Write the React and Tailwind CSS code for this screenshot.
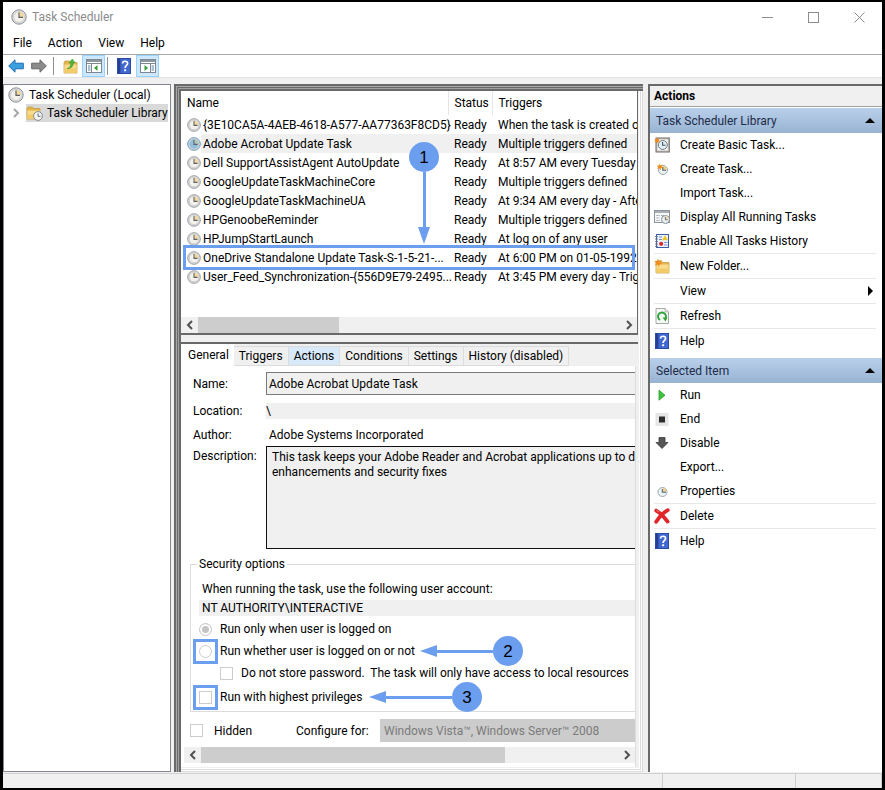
import React from "react";

const ClockIcon = ({ className, face = "#f4f1ea", wedge = "#f3d9a0", rim = "#8b8f94" }) => (
  <svg viewBox="0 0 16 16" className={className} aria-hidden="true">
    <circle cx="8" cy="8" r="7.2" fill="#dfe1e3" stroke={rim} strokeWidth="1" />
    <circle cx="8" cy="8" r="5.4" fill={face} stroke="#b5b8bb" strokeWidth="0.6" />
    <path d="M8 8V2.8A5.2 5.2 0 0 1 13.2 8Z" fill={wedge} />
    <path d="M8 3.4V8.4H12" fill="none" stroke="#5a5f66" strokeWidth="1.2" />
  </svg>
);

const HelpIcon = ({ className }) => (
  <svg viewBox="0 0 16 16" className={className} aria-hidden="true">
    <rect x="1.5" y="0.5" width="13" height="15" fill="#4168cf" stroke="#2b4aa6" />
    <path d="M2 1h2.4v14H2Z" fill="#263f94" />
    <path d="M6.6 5.4C6.6 2.6 11.6 2.5 11.6 5.4C11.6 7.4 9.1 7.4 9.1 10" fill="none" stroke="#fff" strokeWidth="1.7" />
    <rect x="8.2" y="11.3" width="1.9" height="1.9" fill="#fff" />
  </svg>
);

const Folder = ({ x = 0, y = 0 }) => (
  <g transform={`translate(${x} ${y})`}>
    <path d="M1 3.5L2 2h4.5l1 1.5H14V14H1Z" fill="#e3b54d" stroke="#c39a3f" strokeWidth="0.7" />
    <path d="M1.4 5.5H13.6V13.6H1.4Z" fill="#f9dc8b" />
    <path d="M1.4 9.5H13.6V13.6H1.4Z" fill="#f3cb68" />
  </g>
);

const LibraryIcon = ({ className }) => (
  <svg viewBox="0 0 17 16" className={className} aria-hidden="true">
    <Folder />
    <circle cx="12" cy="11" r="4.4" fill="#f5f4ee" stroke="#72818f" strokeWidth="0.9" />
    <path d="M12 8.3v3h2.6" fill="none" stroke="#4f6478" strokeWidth="0.9" />
  </svg>
);

const Spark = () => (
  <path d="M4 0.5L5 3L7.8 1.8L6.4 4.4L8.4 6L5.6 6.3L5 9L3.5 6.6L0.8 7.6L2 5L0.3 3.2L3 3Z" fill="#f08c1c" />
);

const NewFolderIcon = ({ className }) => (
  <svg viewBox="0 0 16 16" className={className} aria-hidden="true">
    <Folder x={1} y={1} />
    <Spark />
  </svg>
);

const BasicTaskIcon = ({ className }) => (
  <svg viewBox="0 0 16 16" className={className} aria-hidden="true">
    <rect x="2" y="1" width="13.3" height="14" fill="#c9c4c0" stroke="#746b68" />
    <rect x="3.5" y="2.5" width="10.3" height="11" fill="#f5f5f3" />
    <circle cx="8.8" cy="8" r="4.5" fill="#e5edf2" stroke="#69808f" />
    <path d="M8.6 5v3.3H11.5" fill="none" stroke="#3f5768" strokeWidth="1.1" />
    <g transform="scale(0.75)"><Spark /></g>
  </svg>
);

const CreateTaskIcon = ({ className }) => (
  <svg viewBox="0 0 16 16" className={className} aria-hidden="true">
    <circle cx="9" cy="9" r="4.5" fill="#eef1f2" stroke="#98a6ae" />
    <path d="M9 9V5A4 4 0 0 1 13 9Z" fill="#f3d08a" />
    <path d="M8.8 6v3.3H12" fill="none" stroke="#4a6374" strokeWidth="1.1" />
    <g transform="translate(2.5 2) scale(0.8)"><Spark /></g>
  </svg>
);

const RunningTasksIcon = ({ className }) => (
  <svg viewBox="0 0 16 16" className={className} aria-hidden="true">
    <rect x="0.5" y="1.5" width="15" height="12" fill="#f8f8f8" stroke="#8c9299" />
    <path d="M1 2h14v2H1Z" fill="#a9afb5" />
    <path d="M2.5 6.5h3M2.5 9h3M2.5 11.5h3M7 6.5h3" stroke="#8e99a3" strokeDasharray="1.4 0.6" />
    <circle cx="11.5" cy="10.5" r="4" fill="#edf1f2" stroke="#77868f" strokeWidth="0.9" />
    <path d="M11.5 10.5V7A3.5 3.5 0 0 1 15 10.5Z" fill="#f0dcae" />
    <path d="M11.4 8v2.8h2.2" fill="none" stroke="#4d6373" strokeWidth="0.9" />
  </svg>
);

const HistoryIcon = ({ className }) => (
  <svg viewBox="0 0 16 16" className={className} aria-hidden="true">
    <rect x="2.5" y="1.5" width="12" height="13" fill="#eef3fb" stroke="#3c5da8" />
    <path d="M1 3.5h3M1 6h3M1 8.5h3M1 11h3M1 13.3h3" stroke="#6b7686" strokeWidth="0.9" />
    <path d="M5 4h3M5 6.5h3M10 9.5h3.5M10 12h3.5" stroke="#6686c8" strokeWidth="0.9" />
    <path d="M11 2.3L13.9 7.3H8.1Z" fill="#f2c31d" />
    <circle cx="7.2" cy="10.8" r="2.1" fill="#d92a2a" />
  </svg>
);

const RefreshIcon = ({ className }) => (
  <svg viewBox="0 0 16 16" className={className} aria-hidden="true">
    <path d="M2 0.5h9l3.5 3.3V15.5H2Z" fill="#f8f8f8" stroke="#a4aaa4" />
    <path d="M11 0.5v3.3h3.5" fill="#e2e2e2" stroke="#a4aaa4" strokeWidth="0.7" />
    <path d="M6 12A4 4 0 1 1 11.4 10.6" fill="none" stroke="#2fa63c" strokeWidth="1.9" />
    <path d="M8.6 9.6H13.6L11.4 13.6Z" fill="#2fa63c" />
  </svg>
);

const RunIcon = ({ className }) => (
  <svg viewBox="0 0 16 16" className={className} aria-hidden="true">
    <path d="M5 3.2L11 8.2L5 13.2Z" fill="#3cc53a" stroke="#2a9a2c" strokeWidth="0.8" />
  </svg>
);

const EndIcon = ({ className }) => (
  <svg viewBox="0 0 16 16" className={className} aria-hidden="true">
    <rect x="1.5" y="2" width="13" height="13" fill="#e6e6e6" />
    <rect x="5" y="5.5" width="6" height="6" fill="#2d2d2d" />
  </svg>
);

const DisableIcon = ({ className }) => (
  <svg viewBox="0 0 16 16" className={className} aria-hidden="true">
    <path d="M5 2.5h6v5h3L8 13.5L2 7.5h3Z" fill="#565656" stroke="#3b3b3b" strokeWidth="0.8" />
  </svg>
);

const PropertiesIcon = ({ className }) => (
  <svg viewBox="0 0 16 16" className={className} aria-hidden="true">
    <circle cx="8.5" cy="9" r="4.5" fill="#eef3f6" stroke="#9aa9b4" />
    <path d="M8.5 9V5A4 4 0 0 1 12.5 9Z" fill="#f1cf86" />
    <path d="M8.3 6v3.3H12" fill="none" stroke="#4d6c85" strokeWidth="1.1" />
  </svg>
);

const DeleteIcon = ({ className }) => (
  <svg viewBox="0 0 16 16" className={className} aria-hidden="true">
    <path d="M2.2 2.6C6 4.8 10.5 9.5 13.6 13.6M13.8 2.2C9.5 4.6 5 9.4 2.2 13.8" fill="none" stroke="#e0262b" strokeWidth="3.8" strokeLinecap="round" />
    <path d="M2.4 2.2L5 4" stroke="#f27a7a" strokeWidth="1" />
  </svg>
);

const ArrowIcon = ({ className, fill, stroke }) => (
  <svg viewBox="0 0 16 16" className={className} aria-hidden="true">
    <path d="M0.7 8L7 1.8V5.2H15.3V10.8H7V14.2Z" fill={fill} stroke={stroke} strokeLinejoin="round" />
  </svg>
);

const UpFolderIcon = ({ className }) => (
  <svg viewBox="0 0 16 16" className={className} aria-hidden="true">
    <Folder x={1} y={1} />
    <path d="M5.2 10.5C8 9.8 9 7.5 8.8 4.8H7L10.3 1L13 4.8H11.2C11.2 8.5 9 11 5.2 10.5Z" fill="#4bb83c" stroke="#2f8f29" strokeWidth="0.5" />
  </svg>
);

const PaneIcon = ({ className, flip }) => (
  <svg viewBox="0 0 16 14" className={className} aria-hidden="true">
    <rect x="0.5" y="0.5" width="15" height="13" fill="#fff" stroke="#7d8790" />
    <path d="M1 1h14v2H1Z" fill="#8d979f" />
    {flip ? (
      <>
        <path d="M1 4.5h14M10.5 5v8.5" stroke="#7d8790" />
        <path d="M11.6 7H14M11.6 9H14M11.6 11H14" stroke="#5d7fa5" />
        <path d="M4.5 6v6L8 9Z" fill="#35a035" />
      </>
    ) : (
      <>
        <path d="M1 4.5h14M5.5 5v8.5" stroke="#7d8790" />
        <path d="M2 7h2.4M2 9h2.4M2 11h2.4" stroke="#5d7fa5" />
        <path d="M11.5 6v6L8 9Z" fill="#35a035" />
      </>
    )}
  </svg>
);

const Chevron = ({ className, flip }) => (
  <svg viewBox="0 0 8 10" className={className} aria-hidden="true">
    <path d={flip ? "M2 1L6 5L2 9" : "M6 1L2 5L6 9"} fill="none" stroke="currentColor" strokeWidth="2" />
  </svg>
);

const tasks = [
  ["{3E10CA5A-4AEB-4618-A577-AA77363F8CD5}", "When the task is created or modified"],
  ["Adobe Acrobat Update Task", "Multiple triggers defined"],
  ["Dell SupportAssistAgent AutoUpdate", "At 8:57 AM every Tuesday of every week"],
  ["GoogleUpdateTaskMachineCore", "Multiple triggers defined"],
  ["GoogleUpdateTaskMachineUA", "At 9:34 AM every day - After triggered"],
  ["HPGenoobeReminder", "Multiple triggers defined"],
  ["HPJumpStartLaunch", "At log on of any user"],
  ["OneDrive Standalone Update Task-S-1-5-21-...", "At 6:00 PM on 01-05-1992"],
  ["User_Feed_Synchronization-{556D9E79-2495...", "At 3:45 PM every day - Trigger expires"],
];

const libraryActions = [
  { label: "Create Basic Task...", icon: BasicTaskIcon },
  { label: "Create Task...", icon: CreateTaskIcon },
  { label: "Import Task..." },
  { label: "Display All Running Tasks", icon: RunningTasksIcon },
  { label: "Enable All Tasks History", icon: HistoryIcon },
  { label: "New Folder...", icon: NewFolderIcon, divider: true },
  { label: "View", divider: true, submenu: true },
  { label: "Refresh", icon: RefreshIcon, divider: true },
  { label: "Help", icon: HelpIcon, divider: true },
];

const itemActions = [
  { label: "Run", icon: RunIcon },
  { label: "End", icon: EndIcon },
  { label: "Disable", icon: DisableIcon },
  { label: "Export..." },
  { label: "Properties", icon: PropertiesIcon },
  { label: "Delete", icon: DeleteIcon, divider: true },
  { label: "Help", icon: HelpIcon, divider: true },
];

const tabs = ["General", "Triggers", "Actions", "Conditions", "Settings", "History (disabled)"];

const TitleBar = () => (
  <header className="flex h-[30px] items-center bg-white pl-2 text-[#8c8c8c]">
    <ClockIcon className="h-4 w-4" />
    <h1 className="ml-[5px] flex-1">Task Scheduler</h1>
    <button aria-label="Minimize" className="flex w-[46px] justify-center">
      <svg viewBox="0 0 11 11" className="h-[11px] w-[11px]"><path d="M0 5.5h11" stroke="currentColor" /></svg>
    </button>
    <button aria-label="Maximize" className="flex w-[46px] justify-center">
      <svg viewBox="0 0 11 11" className="h-[11px] w-[11px]"><rect x="0.5" y="0.5" width="10" height="10" fill="none" stroke="currentColor" /></svg>
    </button>
    <button aria-label="Close" className="flex w-[46px] justify-center">
      <svg viewBox="0 0 11 11" className="h-[11px] w-[11px]"><path d="M0.5 0.5l10 10M10.5 0.5l-10 10" stroke="currentColor" /></svg>
    </button>
  </header>
);

const Toolbar = () => (
  <div className="flex h-[23px] items-center border-b border-[#e2e2e2] bg-white pl-[5px]">
    <button aria-label="Back"><ArrowIcon className="h-4 w-4" fill="#3c9fe0" stroke="#1d6fae" /></button>
    <button aria-label="Forward" className="ml-[7px]"><ArrowIcon className="h-4 w-4 rotate-180" fill="#8c8c8c" stroke="#666" /></button>
    <span className="ml-[6px] h-[18px] w-px bg-[#8f8f8f]" />
    <button aria-label="Up one level" className="ml-2"><UpFolderIcon className="h-4 w-4" /></button>
    <button aria-label="Show console tree" className="ml-1 flex h-[22px] w-[23px] items-center justify-center border border-[#99d1ff] bg-[#cce8ff]">
      <PaneIcon className="h-[14px] w-4" />
    </button>
    <span className="ml-[2px] h-[18px] w-px bg-[#8f8f8f]" />
    <button aria-label="Help" className="ml-2"><HelpIcon className="h-4 w-4" /></button>
    <button aria-label="Show action pane" className="ml-1 flex h-[22px] w-[23px] items-center justify-center border border-[#99d1ff] bg-[#cce8ff]">
      <PaneIcon className="h-[14px] w-4" flip />
    </button>
  </div>
);

const TreePane = () => (
  <nav className="w-[168px] shrink-0 border border-[#828790] bg-white pt-px">
    <a href="#local" className="flex h-[18px] items-center gap-[5px] pl-1">
      <ClockIcon className="h-4 w-4" />
      Task Scheduler (Local)
    </a>
    <div className="flex h-[18px] items-center pr-[2px]">
      <Chevron className="ml-2 h-[10px] w-2 shrink-0 text-[#a6a6a6]" flip />
      <a href="#library" className="ml-[6px] flex h-full flex-1 items-center gap-1 whitespace-nowrap bg-[#d9d9d9]">
        <LibraryIcon className="h-4 w-[17px] shrink-0" />
        Task Scheduler Library
      </a>
    </div>
  </nav>
);

const HScroll = ({ thumb }) => (
  <div className="flex h-4 items-center bg-[#f0f0f0] text-[#505050]">
    <button aria-label="Scroll left" className="flex w-[17px] justify-center"><Chevron className="h-[10px] w-2" /></button>
    <div className="h-full flex-1"><div className={`h-full bg-[#cdcdcd] ${thumb}`} /></div>
    <button aria-label="Scroll right" className="flex w-[17px] justify-center"><Chevron className="h-[10px] w-2" flip /></button>
  </div>
);

const Badge = ({ children }) => (
  <span className="flex h-[30px] w-[30px] shrink-0 items-center justify-center rounded-full bg-[#6c9ef0] font-['Liberation_Sans',sans-serif] text-[17px] leading-none text-black">
    {children}
  </span>
);

const LeftCallout = ({ children, className }) => (
  <div className={`absolute top-1/2 flex -translate-y-1/2 items-center ${className}`}>
    <svg viewBox="0 0 17 12" className="h-3 w-[17px]"><path d="M0 6L17 0V12Z" fill="#6c9ef0" /></svg>
    <span className="h-[3px] flex-1 bg-[#6c9ef0]" />
    <Badge>{children}</Badge>
  </div>
);

const TaskList = () => (
  <section className="flex flex-col overflow-hidden border-b-2 border-r border-[#696969] bg-white">
    <div className="relative">
      <table className="w-full table-fixed border-collapse text-left">
        <colgroup>
          <col className="w-[267px]" />
          <col className="w-11" />
          <col />
        </colgroup>
        <thead>
          <tr className="h-6">
            <th className="border-r border-[#e5e5e5] pl-[6px] font-normal">Name</th>
            <th className="border-r border-[#e5e5e5] pl-[6px] font-normal">Status</th>
            <th className="pl-[6px] font-normal">Triggers</th>
          </tr>
        </thead>
        <tbody>
          {tasks.map(([name, trigger], i) => (
            <tr key={name} className="h-[19px]">
              <td className="p-0 pl-[6px]">
                <div className="flex items-center">
                  {i === 1 ? (
                    <ClockIcon className="h-[14px] w-[14px] shrink-0" face="#8fc0e0" wedge="#b5c9b9" rim="#5286ad" />
                  ) : (
                    <ClockIcon className="h-[14px] w-[14px] shrink-0" />
                  )}
                  <span className={`h-[19px] flex-1 whitespace-nowrap pl-[2px] pt-px leading-[18px] ${i === 1 ? "bg-[#f0f0f0]" : ""}`}>{name}</span>
                </div>
              </td>
              <td className={`p-0 pl-[6px] ${i === 1 ? "bg-[#f0f0f0]" : ""}`}>Ready</td>
              <td className={`overflow-hidden whitespace-nowrap p-0 pl-[6px] ${i === 1 ? "bg-[#f0f0f0]" : ""}`}>{trigger}</td>
            </tr>
          ))}
        </tbody>
      </table>
      {/* callout 1 */}
      <div className="absolute left-[228px] top-[51px] flex flex-col items-center">
        <Badge>1</Badge>
        <span className="h-[55px] w-[3px] bg-[#6c9ef0]" />
        <svg viewBox="0 0 12 17" className="h-[17px] w-3"><path d="M0 0H12L6 17Z" fill="#6c9ef0" /></svg>
      </div>
      <div className="absolute inset-x-[2px] top-[154px] h-[25px] border-[3px] border-[#6c9ef0]" />
    </div>
    <div className="mt-[31px]"><HScroll thumb="w-1/3" /></div>
  </section>
);

const checkClass = "h-[13px] w-[13px] shrink-0 appearance-none border border-[#cccccc] bg-white";
const radioClass = "h-[13px] w-[13px] shrink-0 appearance-none rounded-full border border-[#cccccc] bg-white checked:bg-[#c4c4c4] checked:shadow-[inset_0_0_0_2px_#fff]";

const Marker = ({ children }) => (
  <span className="relative flex">
    {children}
    <span className="absolute -inset-[6px] border-[3px] border-[#6c9ef0]" />
  </span>
);

const GeneralTab = () => (
  <div className="mr-[2px] border-r border-[#dcdcdc] bg-white pb-1">
    <form className="pl-[9px] pt-[6px]">
      <div className="grid grid-cols-[73px_1fr] items-center pl-[3px]">
        <label htmlFor="name">Name:</label>
        <input id="name" readOnly defaultValue="Adobe Acrobat Update Task" className="h-[23px] min-w-0 border border-r-0 border-[#7a7a7a] bg-[#f0f0f0] pl-[2px] outline-none" />
        <label htmlFor="location" className="mt-2">Location:</label>
        <input id="location" readOnly defaultValue="\" className="mt-[7px] h-4 min-w-0 bg-[#f0f0f0] outline-none" />
        <label htmlFor="author" className="mt-2">Author:</label>
        <input id="author" readOnly defaultValue="Adobe Systems Incorporated" className="mt-2 h-4 min-w-0 pl-[3px] outline-none" />
        <label htmlFor="description" className="mt-[3px] self-start pt-[2px]">Description:</label>
        <textarea
          id="description"
          readOnly
          wrap="off"
          defaultValue={"This task keeps your Adobe Reader and Acrobat applications up to date with the latest\nenhancements and security fixes"}
          className="mt-[3px] h-[103px] min-w-0 resize-none overflow-hidden border border-r-0 border-[#111] bg-[#f0f0f0] pl-[5px] pt-[3px] leading-[15px] outline-none"
        />
      </div>

      <fieldset className="mt-[7px] min-w-0 border border-r-0 border-[#dcdcdc] pb-px">
        <legend className="ml-[6px] px-[2px] leading-4">Security options</legend>
        <div className="pl-2">
          <p className="mt-[9px] pl-[3px] leading-4">When running the task, use the following user account:</p>
          <p className="mt-[3px] bg-[#f0f0f0] pl-[3px] leading-4">NT AUTHORITY\INTERACTIVE</p>
          <label className="mt-[2px] flex h-[22px] items-center gap-2">
            <input type="radio" name="logon" disabled defaultChecked className={radioClass} />
            Run only when user is logged on
          </label>
          <div className="relative h-[22px]">
            <label className="flex h-full items-center gap-2">
              <Marker><input type="radio" name="logon" disabled className={radioClass} /></Marker>
              Run whether user is logged on or not
            </label>
            <LeftCallout className="left-[221px] w-[103px]">2</LeftCallout>
          </div>
          <label className="flex h-[22px] items-center gap-2 whitespace-pre pl-[21px]">
            <input type="checkbox" disabled className={checkClass} />
            {"Do not store password.  The task will only have access to local resources"}
          </label>
          <div className="relative h-[26px]">
            <label className="flex h-full items-center gap-2">
              <Marker><input type="checkbox" disabled className={checkClass} /></Marker>
              Run with highest privileges
            </label>
            <LeftCallout className="left-[170px] w-[113px]">3</LeftCallout>
          </div>
        </div>
      </fieldset>

      <div className="mt-[7px] flex items-center">
        <label className="flex w-[106px] items-center gap-[11px]">
          <input type="checkbox" disabled className={checkClass} />
          Hidden
        </label>
        <label htmlFor="configure" className="w-[84px]">Configure for:</label>
        <select id="configure" disabled className="h-[23px] min-w-0 flex-1 appearance-none bg-[#cccccc] pl-1 text-[#7b7b7b] opacity-100">
          <option>Windows Vista™, Windows Server™ 2008</option>
        </select>
      </div>
    </form>
    <div className="ml-[3px] mt-[5px]"><HScroll thumb="w-[73%]" /></div>
  </div>
);

const TaskDetails = () => (
  <section className="mt-[7px] flex flex-1 flex-col border-t-2 border-[#696969]">
    <div role="tablist" className="flex items-end">
      {tabs.map((tab, i) => (
        <button
          key={tab}
          role="tab"
          aria-selected={i === 0}
          className={
            i === 0
              ? "h-[22px] bg-white pl-[7px] pr-[5px]"
              : i === 2
                ? "h-5 border border-l-0 border-[#dcdcdc] bg-[#d8eafa] px-[5px]"
                : "h-5 border border-l-0 border-[#dcdcdc] bg-[#f0f0f0] px-[5px]"
          }
        >
          {tab}
        </button>
      ))}
    </div>
    <GeneralTab />
  </section>
);

const ActionGroup = ({ title, items }) => (
  <div>
    <h3>
      <button className="flex h-[25px] w-full items-center justify-between bg-gradient-to-b from-[#b9d0ea] to-[#98b3d3] pl-[6px] pr-[7px] text-[#1e2c48]">
        {title}
        <svg viewBox="0 0 10 5" className="h-[5px] w-[10px]"><path d="M5 0L10 5H0Z" fill="#000" /></svg>
      </button>
    </h3>
    <ul className="pl-1 pr-[6px]">
      {items.map(({ label, icon: Icon, divider, submenu }) => (
        <li key={label} className={divider ? "border-t border-[#e8e8e8]" : ""}>
          <button className="flex h-6 w-full items-center gap-[10px] text-left">
            <span className="h-4 w-4">{Icon && <Icon className="h-4 w-4" />}</span>
            <span className="flex-1">{label}</span>
            {submenu && (
              <svg viewBox="0 0 5 10" className="mr-[3px] h-[10px] w-[5px]"><path d="M0 0L5 5L0 10Z" fill="#000" /></svg>
            )}
          </button>
        </li>
      ))}
    </ul>
  </div>
);

const ActionsPane = () => (
  <aside className="flex w-[234px] shrink-0 flex-col border-l-2 border-t-2 border-l-[#696969] border-t-[#696969] bg-white">
    <h2 className="mb-px h-[21px] border-b border-[#a0a0a0] bg-[#f0f0f0] pl-1 font-bold leading-5">Actions</h2>
    <div className="flex flex-col gap-[5px]">
      <ActionGroup title="Task Scheduler Library" items={libraryActions} />
      <ActionGroup title="Selected Item" items={itemActions} />
    </div>
  </aside>
);

const App = () => (
  <div className="flex min-h-screen flex-col border-x-[3px] border-y-2 border-black bg-[#f0f0f0] font-[Roboto,'Open_Sans',sans-serif] text-[12px] leading-4 text-black">
    <TitleBar />
    <nav className="flex h-[23px] items-center gap-4 border-b border-[#a8a8a8] bg-white pl-[10px]">
      <button>File</button>
      <button>Action</button>
      <button>View</button>
      <button>Help</button>
    </nav>
    <Toolbar />
    <div className="flex flex-1 pt-[6px]">
      <TreePane />
      <main className="ml-[3px] mr-[5px] flex min-w-0 flex-1 flex-col pb-[5px] pl-[7px] pr-[5px] pt-[7px] shadow-[inset_2px_2px_0_#696969,inset_3px_3px_0_#a8a8a8,inset_4px_4px_0_#696969,inset_5px_5px_0_#a0a0a0,inset_7px_7px_0_#696969,inset_-1px_-1px_0_#dcdcdc,inset_-2px_-2px_0_#fff,inset_-3px_-3px_0_#dcdcdc,inset_-4px_-4px_0_#fff]">
        <TaskList />
        <TaskDetails />
      </main>
      <ActionsPane />
    </div>
    <footer className="mt-px flex h-[15px] border-t border-[#d0d0d0]">
      <div className="flex-1" />
      <div className="w-[133px] border-l border-[#cfcfcf]" />
      <div className="w-[87px] border-l border-r border-[#cfcfcf]" />
    </footer>
  </div>
);

export default App;
